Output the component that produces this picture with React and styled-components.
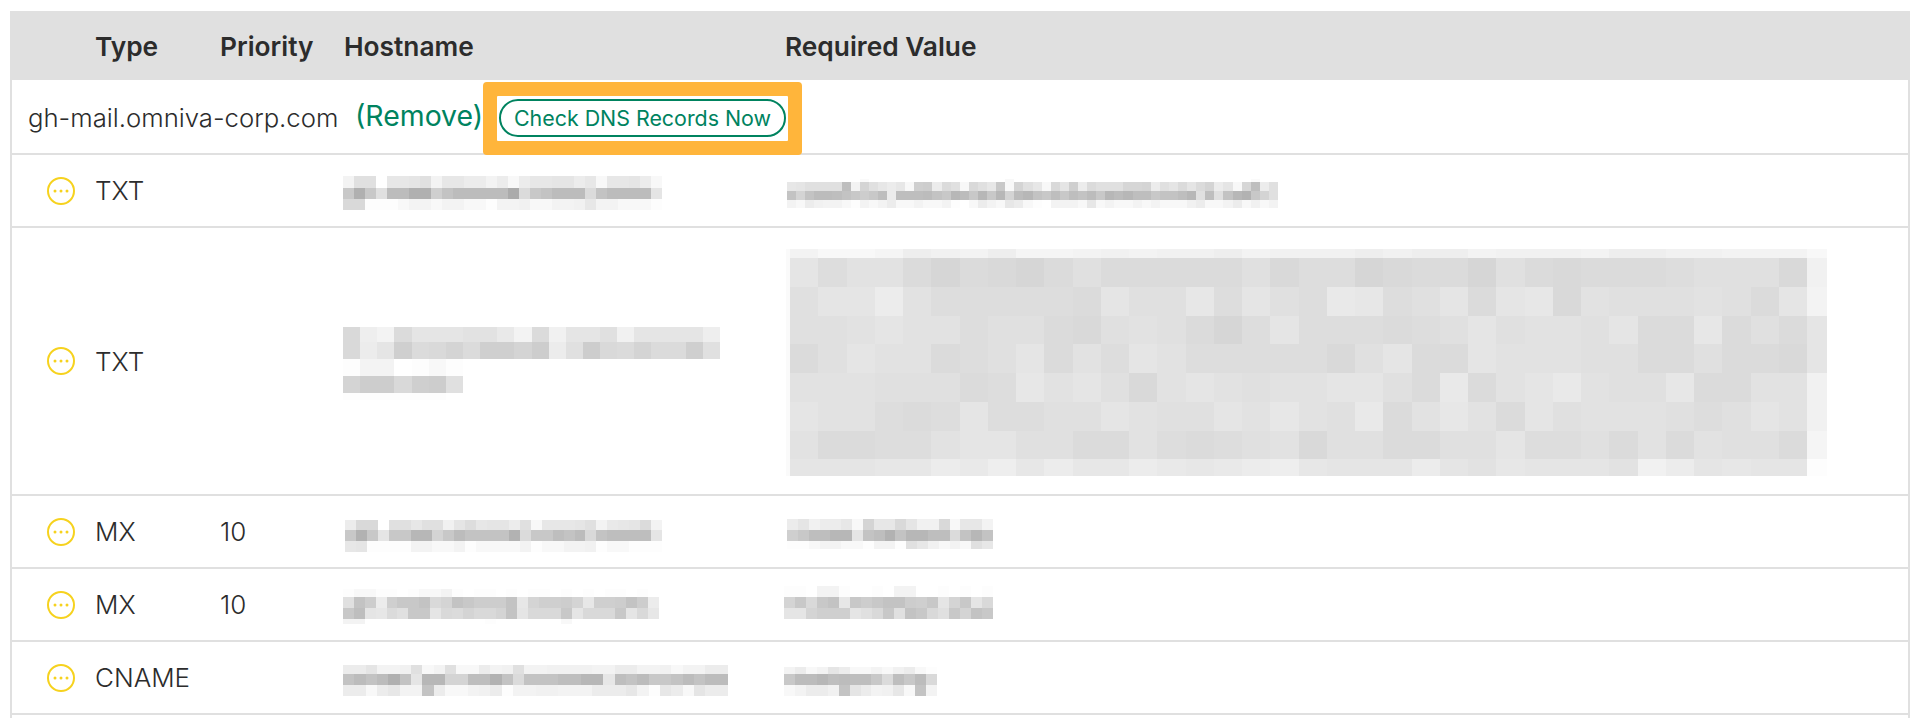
import React from "react"
import styled, { createGlobalStyle } from "styled-components"

const GlobalStyle = createGlobalStyle`
  html, body {
    margin: 0;
    height: 718px;
    overflow: hidden;
    background: #fff;
  }
`

const COLUMNS = "83px 125px 124px 441px 1fr"
const TEXT = "#2c2c2c"
const GREEN = "#00835f"
const LINE = "#e0e0e0"

const Page = styled.div`
  padding: 11px 10px 0;
  font-family: Inter, "Liberation Sans", sans-serif;
  color: ${TEXT};
`

const Table = styled.div`
  height: 707px;
  border: solid ${LINE};
  border-width: 0 2px;
  overflow: hidden;
`

const HeaderRow = styled.div`
  display: grid;
  grid-template-columns: ${COLUMNS};
  align-items: center;
  height: 69px;
  padding-top: 2px;
  box-sizing: border-box;
  background: ${LINE};
  font-size: 26.3px;
  font-weight: 600;
`

const HeaderCell = styled.div`
  grid-column: ${({ $col }) => $col};
`

const DomainRow = styled.div`
  display: flex;
  align-items: flex-start;
  height: 75px;
  box-sizing: border-box;
  border-bottom: 2px solid ${LINE};
`

const Domain = styled.span`
  margin: 22px 0 0 16px;
  width: 327px;
  font-size: 25.7px;
  font-weight: 300;
  white-space: nowrap;
`

const RemoveLink = styled.a`
  margin-top: 18px;
  width: 128px;
  font-size: 28.4px;
  color: ${GREEN};
  white-space: nowrap;
`

const Highlight = styled.div`
  width: 291px;
  height: 45px;
  margin: 16px 0 0 14px;
  padding: 3px 2px 4px;
  box-sizing: border-box;
  box-shadow: 0 0 0 14px #ffb53b;
  border-radius: 1px;
`

const CheckButton = styled.button`
  display: block;
  width: 287px;
  height: 38px;
  padding: 0;
  box-sizing: border-box;
  border: 2px solid ${GREEN};
  border-radius: 19px;
  background: #fff;
  color: ${GREEN};
  font-family: inherit;
  font-size: 21.4px;
  white-space: nowrap;
`

const RecordRow = styled.div`
  display: grid;
  grid-template-columns: ${COLUMNS};
  align-items: center;
  height: ${({ $height }) => $height}px;
  box-sizing: border-box;
  border-bottom: 2px solid ${LINE};
  font-size: 26px;
  font-weight: 300;
`

const StatusSvg = styled.svg`
  display: block;
  margin-left: 35px;
`

const MosaicSvg = styled.svg`
  display: block;
  align-self: start;
  margin: ${({ $top }) => $top}px 0 0 ${({ $left }) => $left}px;
`

const StatusIcon = () => (
  <StatusSvg width="28" height="28" viewBox="0 0 28 28">
    <circle cx="14" cy="14" r="13" fill="none" stroke="#f6d21e" strokeWidth="2" />
    <circle cx="8" cy="14" r="1.5" fill="#f6d21e" />
    <circle cx="14" cy="14" r="1.5" fill="#f6d21e" />
    <circle cx="20" cy="14" r="1.5" fill="#f6d21e" />
  </StatusSvg>
)

// blurred values: one character per cell, 0 is white and z is the darkest grey
const shade = (ch) => {
  const grey = Math.round(255 - parseInt(ch, 36) * 2.4)
  return `rgb(${grey},${grey},${grey})`
}

const Mosaic = ({ width, top, left, sizes, rows, edges }) => {
  const [leftEdge, rightEdge] = edges || [0, 0]
  const cols = rows[0].length - (edges ? 2 : 0)
  const cell = (width - leftEdge - rightEdge) / cols
  const height = sizes.reduce((sum, size) => sum + size, 0)
  let y = 0
  return (
    <MosaicSvg
      $top={top}
      $left={left}
      width={width}
      height={height}
      viewBox={`0 0 ${width} ${height}`}
      shapeRendering="crispEdges"
    >
      {rows.map((row, r) => {
        const rowY = y
        y += sizes[r]
        return [...row].map((ch, c) => {
          let x = leftEdge + (c - (edges ? 1 : 0)) * cell
          let w = cell
          if (edges && c === 0) {
            x = 0
            w = leftEdge
          }
          if (edges && c === row.length - 1) {
            w = rightEdge
          }
          return <rect key={`${r}-${c}`} x={x} y={rowY} width={w + 0.5} height={sizes[r]} fill={shade(ch)} />
        })
      })}
    </MosaicSvg>
  )
}

const records = [
  {
    type: "TXT",
    height: 73,
    host: {
      width: 319, top: 21, left: -1, sizes: [12, 11, 11],
      rows: [
        "5dd0aabd5aa885838aabb8a3aab83",
        "nxndssxxkpssssszfnpsssfpssssb",
        "gg11135535533155633556a553331",
      ],
    },
    value: {
      width: 491, top: 24, left: 2, sizes: [3, 9, 9, 8],
      rows: [
        "000000002000000000000000300000000000000000000000000200",
        "abddddr5ida8a3kl8fd3gdan3ida3gbk8fdddhhi8dbfbfi8b3hr8d",
        "pipssrpnlnr8rrrspnusnunuisupnrnrpsnusurrnpprudrdpuwnid",
        "538655315358335335103853a83105553a35335353336833583635",
      ],
    },
  },
  {
    type: "TXT",
    height: 268,
    host: {
      width: 377, top: 99, left: -1, sizes: [15, 17, 17, 17, 7],
      rows: [
        "g75fbbbcc95f6bbd6bbbb7",
        "g8bkfgifkkil8dlgfiffkd",
        "1550131000000000000000",
        "illgkld000000000000000",
        "1111110000000000000000",
      ],
    },
    value: {
      width: 1041, top: 21, left: 1, sizes: [9, 29, 29, 28, 29, 29, 29, 28, 17],
      edges: [4, 20],
      rows: [
        "2" + "53347657445656675" + "6667677566657766555" + "3",
        "2" + "beccfhfghfdfffffd" + "geehgffhdfgfffedddg" + "6",
        "2" + "dbb8ceeeeefbddaeb" + "de9aedbfbagcdddcdfb" + "5",
        "2" + "ddcbcceddfgdcdfhe" + "beeefedbdccdbffafdf" + "b",
        "2" + "fdbccfedbfcebceee" + "eegdbffbcccddffdffg" + "b",
        "2" + "cccdddfeacbdgcbcd" + "ccbbdf9fcb9cddaffcc" + "6",
        "2" + "bccefebeeddbcddbc" + "acd9fcacfbdcccdedbc" + "6",
        "2" + "cffeecbbddffcefed" + "cgddffddbeedfcfcddf" + "4",
        "2" + "bbbaa897a8aa89a98" + "7abbb8bcabbbc68babb" + "1",
      ],
    },
  },
  {
    type: "MX",
    priority: "10",
    height: 73,
    host: {
      width: 317, top: 24, left: 1, sizes: [10, 11, 11],
      rows: [
        "8gg0ddadd6beabb8d3aaabd59abf5",
        "nwnbnnuuinsppppwfnnrpsgprrrrb",
        "ab111155335133335133556133111",
      ],
    },
    value: {
      width: 206, top: 23, left: 2, sizes: [11, 11, 8],
      rows: [
        "8b688a3iaagb66g3aa5",
        "knrruubprwpuurrfpup",
        "11355331551da6353da",
      ],
    },
  },
  {
    type: "MX",
    priority: "10",
    height: 73,
    host: {
      width: 316, top: 20, left: -1, sizes: [8, 11, 11, 5],
      rows: [
        "13311013351011010110101011010",
        "dpl8knnpgipnlllpaikkliakklpl8",
        "nrbafdnnbgfiggipbgggnbgggnbga",
        "55000000000001000000300000000",
      ],
    },
    value: {
      width: 209, top: 17, left: -1, sizes: [11, 11, 11],
      rows: [
        "1105510010550010101",
        "ingnpanlnpplknbinbg",
        "bbikkkbdgndpngdnipn",
      ],
    },
  },
  {
    type: "CNAME",
    height: 73,
    host: {
      width: 385, top: 23, left: -1, sizes: [9, 11, 11],
      rows: [
        "88b556d35d33856d556666558855635588",
        "pspsxpbuuiirrwpfppprruuarpsnnpspss",
        "8838a55p83356815566555888a51a83b88",
      ],
    },
    value: {
      width: 153, top: 25, left: -1, sizes: [7, 11, 11],
      rows: [
        "5835b833536831",
        "nssursrrnfrnsg",
        "35886pb856a3p5",
      ],
    },
  },
]

export default function App() {
  return (
    <Page>
      <GlobalStyle />
      <Table>
        <HeaderRow>
          <HeaderCell $col={2}>Type</HeaderCell>
          <HeaderCell $col={3}>Priority</HeaderCell>
          <HeaderCell $col={4}>Hostname</HeaderCell>
          <HeaderCell $col={5}>Required Value</HeaderCell>
        </HeaderRow>
        <DomainRow>
          <Domain>gh-mail.omniva-corp.com</Domain>
          <RemoveLink>(Remove)</RemoveLink>
          <Highlight>
            <CheckButton>Check DNS Records Now</CheckButton>
          </Highlight>
        </DomainRow>
        {records.map((record, i) => (
          <RecordRow key={i} $height={record.height}>
            <StatusIcon />
            <span>{record.type}</span>
            <span>{record.priority}</span>
            <Mosaic {...record.host} />
            <Mosaic {...record.value} />
          </RecordRow>
        ))}
      </Table>
    </Page>
  )
}
